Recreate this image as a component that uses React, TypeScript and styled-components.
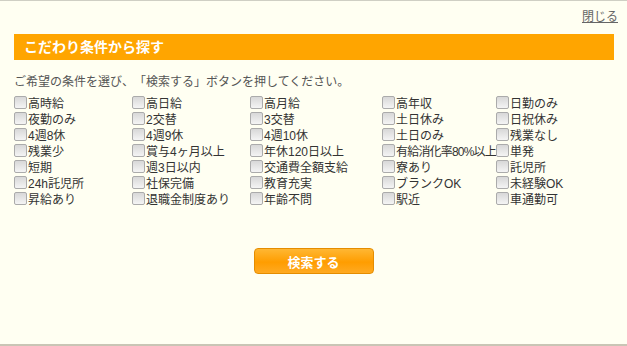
import styled, { createGlobalStyle } from 'styled-components'

const GlobalStyle = createGlobalStyle`
    html, body {
        margin:0;
        padding:0;
        background-color:#fffff2;
    }
    body{
        font-family: "Liberation Sans", "Noto Sans CJK JP", sans-serif;
        text-spacing-trim: space-all;
    }
`

const Page = styled.div`
    height:346px;
    box-sizing:border-box;
    border-top:1px solid #cfcfc4;
    border-bottom:2px solid #c9c5b5;
    padding:0 13px 0 14px;
    display:flex;
    flex-direction:column;
`

const TopBar = styled.div`
    display:flex;
    justify-content:flex-end;
    padding-top:8px;
    height:25px;
    box-sizing:border-box;
    margin-right:-4px;
`

const CloseLink = styled.a`
    font-size:12px;
    line-height:16px;
    color:#666;
    text-decoration:underline;
    cursor:pointer;
`

const Heading = styled.h2`
    margin:8px 0 0;
    height:26px;
    background-color:#ffa500;
    color:#fff;
    font-size:14px;
    font-weight:bold;
    line-height:26px;
    padding-left:10px;
`

const Lead = styled.p`
    margin:14px 0 0;
    font-size:12px;
    line-height:16px;
    color:#555;
`

const Grid = styled.div`
    display:grid;
    grid-template-columns:118px 118px 132px 114px auto;
    grid-auto-rows:16px;
    margin-top:4px;
`

const Item = styled.label<{ $tight?: boolean }>`
    display:flex;
    align-items:center;
    font-size:12px;
    color:#333;
    white-space:nowrap;
    cursor:pointer;
    letter-spacing:${(p) => (p.$tight ? '-0.8px' : 'normal')};
`

const Check = styled.input.attrs({ type: 'checkbox' })`
    appearance:none;
    width:13px;
    height:13px;
    margin:0 1px 0 0;
    box-sizing:border-box;
    border:1px solid #ababab;
    border-radius:2px;
    background:linear-gradient(#d8d8d8, #f4f4f4);
    flex:none;

    &:checked{
        background:#ffa500;
    }
`

const ButtonRow = styled.div`
    display:flex;
    justify-content:center;
    margin-top:42px;
    padding-right:1px;
`

const SearchButton = styled.button`
    width:120px;
    height:26px;
    border:1px solid #e58d00;
    border-radius:4px;
    background:linear-gradient(#ffb733, #ff9d00 55%, #ffaa22);
    color:#fff;
    font-family:inherit;
    font-size:13px;
    font-weight:bold;
    cursor:pointer;
`

const items = [
    '高時給', '高日給', '高月給', '高年収', '日勤のみ',
    '夜勤のみ', '2交替', '3交替', '土日休み', '日祝休み',
    '4週8休', '4週9休', '4週10休', '土日のみ', '残業なし',
    '残業少', '賞与4ヶ月以上', '年休120日以上', '有給消化率80%以上', '単発',
    '短期', '週3日以内', '交通費全額支給', '寮あり', '託児所',
    '24h託児所', '社保完備', '教育充実', 'ブランクOK', '未経験OK',
    '昇給あり', '退職金制度あり', '年齢不問', '駅近', '車通勤可',
]

export default function App() {
    return <>
        <GlobalStyle />
        <Page>
            <TopBar>
                <CloseLink>閉じる</CloseLink>
            </TopBar>
            <Heading>こだわり条件から探す</Heading>
            <Lead>ご希望の条件を選び、「検索する」ボタンを押してください。</Lead>
            <Grid>
                {items.map((item) => (
                    <Item key={item} $tight={item.length > 9}>
                        <Check />{item}
                    </Item>
                ))}
            </Grid>
            <ButtonRow>
                <SearchButton>検索する</SearchButton>
            </ButtonRow>
        </Page>
    </>
}
